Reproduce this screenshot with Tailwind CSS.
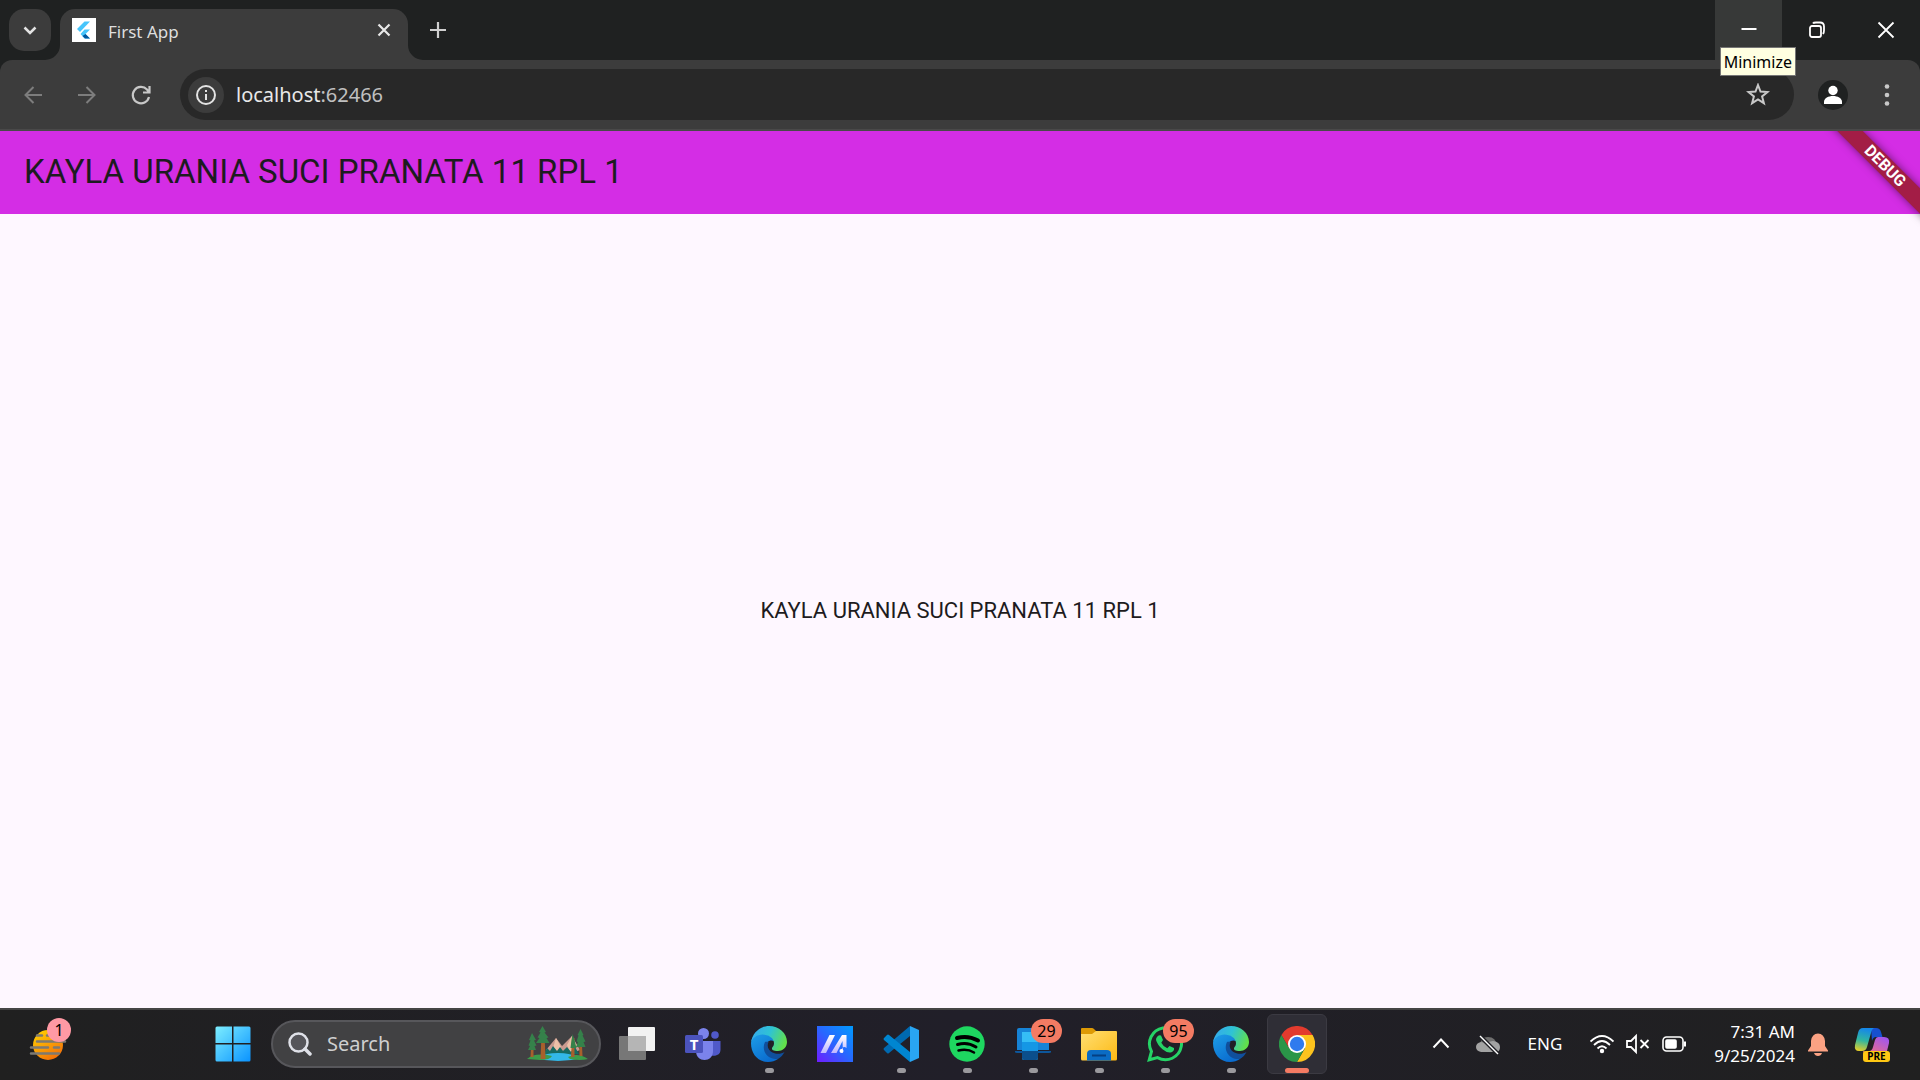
<!DOCTYPE html>
<html lang="en">
<head>
<meta charset="utf-8">
<title>First App</title>
<script src="https://cdn.jsdelivr.net/npm/@tailwindcss/browser@4"></script>
</head>
<body class="flex h-screen flex-col overflow-hidden bg-[#fef7ff] font-['Noto_Sans',sans-serif]">

<svg class="absolute size-0" aria-hidden="true">
  <defs>
    <linearGradient id="e1" x1="0" y1="0.2" x2="1" y2="0.5"><stop offset="0" stop-color="#35a8ee"/><stop offset=".5" stop-color="#2fc3d4"/><stop offset="1" stop-color="#62e04a"/></linearGradient>
    <linearGradient id="e2" x1="0" y1="0" x2="0.6" y2="1"><stop offset="0" stop-color="#1ea0e8"/><stop offset="1" stop-color="#0a6ccf"/></linearGradient>
    <symbol id="edge" viewBox="0 0 36 36">
      <path fill="url(#e2)" d="M0 17C1 8 9 6 15 8c6 2 8 5 8 7-5-2-9 2-8 7 1 6 6 10 12 11-3 2-6 3-10 3C7 36 0 28 0 17z"/>
      <path fill="#104f9c" d="M14 16c-4 8 2 18 13 17 3-2 5-4 6.500-7-3 2-8 2.500-12 .5-4-2-6-6-4-10.500-1-.5-3-.5-3.500 0z"/>
      <path fill="url(#e1)" d="M0 17C1 7 9 0 18 0c10 0 18 7 18 16 0 6-5 9-9 9-5 0-6-1-6-2.500 0-1.500 2-2 2-5.500 0-5-6-8.500-11.500-8.500C6 8.500 1 12 0 17z"/>
    </symbol>
  </defs>
</svg>

<header class="shrink-0 bg-[#1f2121]">
  <div class="flex h-[60px] items-start justify-between">
    <div class="flex items-start pt-[9px] pl-[9px]">
      <button aria-label="Search tabs" class="flex size-[42px] items-center justify-center rounded-[15px] bg-[#3c3c3c]">
        <svg class="size-[18px]" viewBox="0 0 18 18" fill="none" stroke="#e3e3e3" stroke-width="2.500"><path d="M3.500 6.500 9 12l5.500-5.500"/></svg>
      </button>
      <div class="relative ml-[9px] flex h-[51px] w-[348px] rounded-t-[15px] bg-[#3c3c3c] pl-3">
        <svg class="absolute bottom-0 -left-[15px] size-[15px]" viewBox="0 0 15 15"><path fill="#3c3c3c" d="M15 0v15H0A15 15 0 0 0 15 0z"/></svg>
        <svg class="absolute -right-[15px] bottom-0 size-[15px]" viewBox="0 0 15 15"><path fill="#3c3c3c" d="M0 0v15h15A15 15 0 0 1 0 0z"/></svg>
        <svg class="mt-[9px] size-6" viewBox="0 0 24 24"><path fill="#fff" d="M0 0h24v24H0z"/><path fill="#47c5fb" d="M12.500 3.500H18L8 14l-3-3z"/><path fill="#47c5fb" d="M12.500 11.500H18L13.500 16l4.500 4.500h-5.500L8.500 16z"/><path fill="#00569e" d="m10.500 18 3-2 4.500 4.500h-5z"/></svg>
        <span class="mt-[9px] ml-3 text-[17px] leading-7 text-[#dedede]">First App</span>
        <button aria-label="Close tab" class="mt-[9px] mr-3 ml-auto flex size-6 items-center justify-center">
          <svg class="size-6" viewBox="0 0 24 24" stroke="#e8e8e8" stroke-width="2.200"><path d="m6.500 6.500 11 11m0-11-11 11"/></svg>
        </button>
      </div>
      <button aria-label="New tab" class="mt-[9px] ml-[18px] flex size-6 items-center justify-center">
        <svg class="size-6" viewBox="0 0 24 24" stroke="#d0d0d0" stroke-width="2.200"><path d="M12 4v16M4 12h16"/></svg>
      </button>
    </div>
    <div class="flex h-[60px]">
      <button aria-label="Minimize" class="flex w-[67px] items-center justify-center bg-[#373938]">
        <svg class="size-6" viewBox="0 0 24 24" stroke="#fff" stroke-width="2"><path d="M4.500 11h15"/></svg>
      </button>
      <button aria-label="Restore" class="flex w-[69px] items-center justify-center">
        <svg class="size-6" viewBox="0 0 24 24" fill="none" stroke="#fff" stroke-width="1.800"><rect x="5" y="8" width="11" height="11" rx="2"/><path d="M8 5.500q.5-1 3-1h4q4 0 4 4v4q0 2-1 3.500"/></svg>
      </button>
      <button aria-label="Close" class="flex w-[69px] items-center justify-center">
        <svg class="size-6" viewBox="0 0 24 24" stroke="#fff" stroke-width="1.800"><path d="m4.500 4.500 15 15m0-15-15 15"/></svg>
      </button>
    </div>
  </div>
  <div class="flex h-[71px] items-start rounded-t-xl border-b-2 border-[#494949] bg-[#3c3c3c] pt-[9px] pl-[18px]">
    <nav class="flex h-[51px] items-center gap-[31px]">
      <button aria-label="Back"><svg class="size-6" viewBox="0 0 24 24" fill="none" stroke="#7d7d7d" stroke-width="2"><path d="M24 12H7m8.500-8L7.500 12l8 8"/></svg></button>
      <button aria-label="Forward"><svg class="size-6" viewBox="0 0 24 24" fill="none" stroke="#7d7d7d" stroke-width="2"><path d="M5 12h17m-8.500-8 8 8-8 8"/></svg></button>
      <button aria-label="Reload"><svg class="size-6" viewBox="0 0 24 24" fill="none" stroke="#c8c8c8" stroke-width="2.200"><path d="M21 14a8.200 8.200 0 1 1-2-7.500L21 9M21.500 3v6.500H15"/></svg></button>
    </nav>
    <div class="ml-7 flex h-[51px] flex-1 items-center rounded-full bg-[#282828] px-2">
      <button aria-label="Site information" class="flex size-9 items-center justify-center rounded-full bg-[#3c3c3c]">
        <svg class="size-6" viewBox="0 0 24 24" fill="none" stroke="#e3e3e3" stroke-width="2"><circle cx="12" cy="12" r="9"/><path d="M12 11v6M12 7v2"/></svg>
      </button>
      <div class="relative ml-3 h-7 flex-1 text-[20px] leading-7">
        <p aria-hidden="true" class="text-[#c0c0c0]"><span class="text-[#e8e8e8]">localhost</span>:62466</p>
        <input aria-label="Address" class="absolute inset-0 w-full bg-transparent text-transparent outline-none">
      </div>
      <button aria-label="Bookmark this tab" class="mr-4">
        <svg class="size-6" viewBox="0 0 24 24" fill="none" stroke="#c8c8c8" stroke-width="2"><path d="m12 2 2.500 6.500 7 .5-5.400 4.400 1.800 6.800-5.900-3.800-5.900 3.800 1.800-6.800L2.500 9l7-.5z"/></svg>
      </button>
    </div>
    <div class="flex h-[51px] items-center gap-[27px] pr-[21px] pl-6">
      <button aria-label="Profile" class="flex size-[30px] items-center justify-center overflow-hidden rounded-full bg-[#1f2121]">
        <svg class="size-[30px]" viewBox="0 0 30 30" fill="#fff"><circle cx="15" cy="10.500" r="4.700"/><path d="M6 24v-2c0-8 18-8 18 0v2z"/></svg>
      </button>
      <button aria-label="Menu"><svg class="size-6" viewBox="0 0 24 24" fill="#c8c8c8"><circle cx="12" cy="3.500" r="2.300"/><circle cx="12" cy="12" r="2.300"/><circle cx="12" cy="20.500" r="2.300"/></svg></button>
    </div>
  </div>
  <div role="tooltip" class="absolute top-[47px] right-[124px] border border-[#767676] bg-[#ffffe1] px-[3px] pt-px text-[16px] leading-[26px] text-black">Minimize</div>
</header>

<main class="relative flex flex-1 flex-col font-[Roboto,sans-serif] text-[#1d1b20]">
  <h1 class="flex h-[83px] shrink-0 items-center bg-[#d42de5] px-6 pb-[2px] text-[33px] leading-[42px]">KAYLA URANIA SUCI PRANATA 11 RPL 1</h1>
  <div class="absolute top-0 right-0 size-24 overflow-hidden">
    <div class="absolute top-[26px] -left-[9px] h-[18px] w-[140px] rotate-45 bg-[#a31d46] text-center text-[16px] leading-[18px] font-bold text-white shadow-[0_0_9px_rgba(0,0,0,0.5)]">DEBUG</div>
  </div>
  <div class="flex flex-1 items-center justify-center">
    <p class="text-[22px] leading-[30px]">KAYLA URANIA SUCI PRANATA 11 RPL 1</p>
  </div>
</main>

<footer class="flex h-[72px] shrink-0 items-center justify-between border-t-2 border-[#454545] bg-linear-to-r from-[#202020] via-[#211f29] to-[#202020] pb-[2px] text-white">
  <div class="flex items-center">
    <button aria-label="Weather" class="relative ml-[29px] h-12 w-[42px]">
      <svg class="size-full" viewBox="0 0 42 48"><defs><linearGradient id="s" x1="0.200" y1="0" x2=".8" y2="1"><stop offset="0" stop-color="#ffd000"/><stop offset="1" stop-color="#f26a0a"/></linearGradient></defs><circle cx="19" cy="25" r="15" fill="url(#s)"/><path d="M8 15.500h5m5 0h3M8 21.500h28M2 27.500h17m6 0h5M2 33.500h28" stroke="#7d7a72" stroke-width="2.500" stroke-linecap="round"/></svg>
      <span class="absolute -top-[2px] right-0 size-6 rounded-full bg-[#ff99a4] text-center text-[16px] leading-6 text-black">1</span>
    </button>
    <button aria-label="Start" class="ml-[129px] flex w-[66px] justify-center">
      <svg class="size-9" viewBox="0 0 36 36"><defs><linearGradient id="w" x1="0" y1="0" x2="1" y2="1"><stop offset="0" stop-color="#7deeff"/><stop offset="1" stop-color="#0a93ff"/></linearGradient></defs><path fill="url(#w)" d="M2 .5h15v16.500H.5V2Q.5.5 2 .5zM18.500.5H34q1.500 0 1.500 1.500v15h-17zM.5 18.500H17v17H2q-1.500 0-1.500-1.500zM18.500 18.500h17V34q0 1.500-1.500 1.500H18.500z"/></svg>
    </button>
    <label class="ml-[5px] flex h-12 w-[330px] items-center rounded-full border-2 border-[#57575b] bg-[#414143] pr-[9px] pl-[15px]">
      <svg class="size-6 shrink-0" viewBox="0 0 24 24" fill="none" stroke="#dfe1e8" stroke-width="2.500"><circle cx="10.500" cy="10.500" r="9" fill="#55555a"/><path d="m17 17 5 5" stroke-width="3.500" stroke-linecap="round"/></svg>
      <input type="text" placeholder="Search" aria-label="Search" class="ml-[15px] min-w-0 flex-1 bg-transparent text-[20px] leading-7 outline-none placeholder:text-[#cfcfcf]">
      <svg class="h-9 w-[64px] shrink-0" viewBox="0 0 64 36">
        <path d="m20 24 10-12 6 8 10-10 8 14-10 4H26z" fill="#c99a90"/><path d="m30 12 5 9-4 5-4-4zM46 10l5 10-7 6-3-7z" fill="#ecc0a8"/>
        <path d="m18 28 3-6 3 3 3-5 4 5 3-4 3 4 4-4 4 5 4-5 4 7z" fill="#176b62"/>
        <path d="M8 32q24-10 48 0-24 6-48 0z" fill="#32b8e8"/>
        <path d="M1 33q8-7 25-3-2 4-12 4zM42 31q10-5 20 2-8 2-18 0z" fill="#3d9b4a"/>
        <path d="M5.500 12h2V31h-3zM15.500 8h3l1 25h-5zM46 12h2.500v19H45zM53 10h2.500l1 20h-3z" fill="#a8602c"/>
        <path d="m6 7 4 7-2 .5 2.500 5-2 .5 1.500 4H2l2-4-1.500-.5 2-5-1.500-.5zM16.500 0l3.500 6-1.500.5 4 5-2 .5 3 5H10l3.500-5-2-.5 3-5-1.500-.5zM46.500 8l2 6 2 8h-6l1-8zM54.500 3l3 6-1 .5 3 6-2 .5 2 5H50l2-5-1.500-.5 2-6-1-.5z" fill="#35814a"/>
      </svg>
    </label>
    <div class="ml-[3px] flex h-[60px] items-center">
      <button aria-label="Task view" class="flex h-full w-[66px] items-center justify-center">
        <svg class="size-9" viewBox="0 0 36 36"><rect x="9" y="1" width="27" height="24" rx="1" fill="#f2f2f2"/><rect y="10" width="27" height="24" rx="1" fill="#777"/><path d="M9 10h18v15H9z" fill="#b5b5b5"/></svg>
      </button>
      <button aria-label="Teams" class="flex h-full w-[66px] items-center justify-center">
        <svg class="size-9" viewBox="0 0 36 36"><circle cx="30" cy="9" r="3.800" fill="#5059c9"/><path d="M26 15h9.500v8.500c0 5-4 7-9.500 6z" fill="#5059c9"/><circle cx="18.500" cy="7.500" r="5.500" fill="#7b83eb"/><path d="M11 15h17v10c0 6-4 9-8.500 9S11 31 11 25z" fill="#7b83eb"/><rect y="9" width="18" height="18" rx="1.500" fill="#4b53bc"/><text x="9" y="23.500" text-anchor="middle" fill="#fff" font-family="Noto Sans, sans-serif" font-size="15" font-weight="700">T</text></svg>
      </button>
      <button aria-label="Edge" class="relative flex h-full w-[66px] items-center justify-center">
        <svg class="size-9"><use href="#edge"/></svg><span class="absolute bottom-[1px] h-[5px] w-[9px] rounded-full bg-[#9a999d]"></span>
      </button>
      <button aria-label="MyASUS" class="flex h-full w-[66px] items-center justify-center">
        <svg class="size-9" viewBox="0 0 36 36"><defs><linearGradient id="m" x1="1" y1="0" x2="0" y2="1"><stop offset="0" stop-color="#009bff"/><stop offset=".5" stop-color="#2867ff"/><stop offset="1" stop-color="#701cff"/></linearGradient><linearGradient id="mw" x1="0" y1="0" x2="0" y2="1"><stop offset="0" stop-color="#fff"/><stop offset="1" stop-color="#c0b6ff"/></linearGradient></defs><path fill="url(#m)" d="M0 0h36v36H0z"/><path fill="url(#mw)" d="M12.500 9H18L9 27H3.500zM25 9h4.500v13a3 3 0 0 0-4 5H26l-.5-12-6 12H14z"/><circle cx="24.500" cy="25" r="2" fill="#fff"/></svg>
      </button>
      <button aria-label="Visual Studio Code" class="relative flex h-full w-[66px] items-center justify-center">
        <svg class="size-9" viewBox="0 0 36 36"><path fill="#0069b0" d="M27 0v10L6 27q-1 1-2 0l-3-3q-1-1 0-2z"/><path fill="#0086d1" d="M1 14q-1-1 0-2l3-3q1-1 2 0l21 17v10z"/><path fill="#29a5f2" d="m27 0 9 4v28l-9 4z"/></svg><span class="absolute bottom-[1px] h-[5px] w-[9px] rounded-full bg-[#9a999d]"></span>
      </button>
      <button aria-label="Spotify" class="relative flex h-full w-[66px] items-center justify-center">
        <svg class="size-9" viewBox="0 0 36 36" fill="none" stroke="#000" stroke-linecap="round"><circle cx="18" cy="18" r="17.700" fill="#1ed760" stroke="none"/><path d="M8 12q11-3 21 2.500" stroke-width="4"/><path d="M8.500 18.500q10-3 18.500 2.500" stroke-width="3"/><path d="M9.500 24.500q9-2 15.500 2" stroke-width="2.500"/></svg><span class="absolute bottom-[1px] h-[5px] w-[9px] rounded-full bg-[#9a999d]"></span>
      </button>
      <button aria-label="Phone Link" class="relative flex h-full w-[66px] items-center justify-center">
        <svg class="size-9" viewBox="0 0 36 36"><path fill="#1683d6" d="M2 4q0-2 2-2h28q2 0 2 2v20H2z"/><path fill="#0d569b" d="M0 25h36v1q0 1-2 1H2q-2 0-2-1z"/><path fill="#35bdf5" d="M7 6h16v26q0 2-2 2H9q-2 0-2-2z"/><path fill="#1597e5" d="M7 16h16v9H7z"/><path fill="#0b4f8c" d="M7 25h16v7q0 2-2 2H9q-2 0-2-2z"/></svg><span class="absolute top-[5px] left-[31px] h-6 w-[31px] rounded-full bg-[#f47b63] text-center text-[16px] leading-6 text-black">29</span><span class="absolute bottom-[1px] h-[5px] w-[9px] rounded-full bg-[#9a999d]"></span>
      </button>
      <button aria-label="File Explorer" class="relative flex h-full w-[66px] items-center justify-center">
        <svg class="size-9" viewBox="0 0 36 36"><defs><linearGradient id="f" x1="0" y1="0" x2="1" y2="1"><stop offset="0" stop-color="#ffdf73"/><stop offset="1" stop-color="#fdb913"/></linearGradient></defs><path fill="#dd9a05" d="M0 3q0-1 1-1h10q1 0 2 1l2 2v5H0z"/><path fill="url(#f)" d="M0 8h11l4-3h20q1 0 1 1v27q0 1.500-1.500 1.500h-33Q0 34.500 0 33z"/><path fill="#0b6cc4" d="M6 34.500V28q0-4 4-4h16q4 0 4 4v6.500z"/><path d="M11 29.500h14" stroke="#053f82" stroke-width="2"/></svg><span class="absolute bottom-[1px] h-[5px] w-[9px] rounded-full bg-[#9a999d]"></span>
      </button>
      <button aria-label="WhatsApp" class="relative flex h-full w-[66px] items-center justify-center">
        <svg class="size-9" viewBox="0 0 36 36"><path fill="none" stroke="#25d366" stroke-width="3" d="m2.200 33.800 2.300-8.300A16 16 0 1 1 10.500 31.600z"/><path fill="#25d366" d="M10 11q1.500-2.500 4-1.500l2 4.500-1.700 2.700q2 4 6 5.600l2.200-2.300 4.500 2q.5 3-2.500 4.300-4 1.200-9-3T9 14q0-2 1-3z"/></svg><span class="absolute top-[5px] left-[31px] h-6 w-[31px] rounded-full bg-[#f47b63] text-center text-[16px] leading-6 text-black">95</span><span class="absolute bottom-[1px] h-[5px] w-[9px] rounded-full bg-[#9a999d]"></span>
      </button>
      <button aria-label="Edge" class="relative flex h-full w-[66px] items-center justify-center">
        <svg class="size-9"><use href="#edge"/></svg><span class="absolute bottom-[1px] h-[5px] w-[9px] rounded-full bg-[#9a999d]"></span>
      </button>
      <button aria-label="Chrome" class="relative mx-[3px] flex size-[60px] items-center justify-center rounded-md border border-[#3b3a42] bg-[#2f2e36]">
        <svg class="size-9" viewBox="0 0 36 36"><path fill="#e33b2e" d="M2.400 9A18 18 0 0 1 33.600 9H18l-7.800 13.500z"/><path fill="#fcc31e" d="M33.600 9A18 18 0 0 1 18 36l7.800-13.500L18 9z"/><path fill="#2a9648" d="M18 36A18 18 0 0 1 2.400 9l7.800 13.500L18 27z"/><path fill="#2a9648" d="M10 22h15.800L18 36z"/><circle cx="18" cy="18" r="9" fill="#fff"/><circle cx="18" cy="18" r="7.200" fill="#2f7bee"/></svg><span class="absolute bottom-0 h-[5px] w-6 rounded-full bg-[#f47b63]"></span>
      </button>
    </div>
  </div>
  <div class="flex items-center">
    <button aria-label="Show hidden icons"><svg class="size-[18px]" viewBox="0 0 18 18" fill="none" stroke="#fff" stroke-width="2"><path d="m1.500 12.500 7.500-8 7.500 8"/></svg></button>
    <svg class="ml-[26px] size-6" viewBox="0 0 24 24"><path fill="#6f6f6f" d="M4 14q0-9 8-9t9 9z"/><path fill="#a3a3a3" d="M5 20q-5-1-5-5t5-5q3 0 5 2 3-3 7-3 7 1 7 6t-4 5z"/><path d="m4 4 17 17" stroke="#202025" stroke-width="4"/><path d="m4 4 18 18" stroke="#fff" stroke-width="1.500"/></svg>
    <span class="ml-7 text-[17px] leading-6">ENG</span>
    <button aria-label="Network, volume and battery" class="ml-7 flex items-center gap-3">
      <svg class="size-6" viewBox="0 0 24 24" fill="none" stroke="#fff" stroke-width="1.800"><path d="M.5 9.500q11.500-11 23 0M4 13q8-8 16 0M7.500 16.500q4.500-4.500 9 0"/><circle cx="12" cy="19" r="2.200" fill="#fff" stroke="none"/></svg>
      <svg class="size-6" viewBox="0 0 24 24" fill="none" stroke="#fff" stroke-width="1.800"><path d="M1 9h4l5-5v16l-5-5H1zM14.500 8l8 8m0-8-8 8"/></svg>
      <svg class="size-6" viewBox="0 0 24 24" fill="none" stroke="#fff" stroke-width="1.600"><rect x="1" y="5" width="20" height="14" rx="3.500"/><rect x="4" y="8" width="10" height="8" rx="1" fill="#fff"/><path d="M23 9.500v5" stroke-width="2.500"/></svg>
    </button>
    <div class="ml-7 text-right text-[17px] leading-6"><p>7:31 AM</p><p>9/25/2024</p></div>
    <button aria-label="Notifications" class="ml-3"><svg class="size-6" viewBox="0 0 24 24" fill="#fba283"><path d="M1 18.500 4 14V9q1-7.500 7-7.500T18 9v5l3 4.500v1H1zM7 21h8q-1 3-4 3t-4-3z"/></svg></button>
    <button aria-label="Copilot" class="relative mr-[30px] ml-[23px] size-9">
      <svg class="size-9" viewBox="0 0 36 36"><defs><linearGradient id="c1" x1="0.300" y1="0" x2=".1" y2="1"><stop offset="0" stop-color="#1688e8"/><stop offset=".5" stop-color="#30b6a0"/><stop offset="1" stop-color="#f0cf20"/></linearGradient><linearGradient id="c2" x1=".8" y1="0" x2=".2" y2="1"><stop offset="0" stop-color="#a156ef"/><stop offset="1" stop-color="#ff7468"/></linearGradient></defs><path fill="#1750d0" d="M17 2h5q4 0 5 4l1.500 5H22q-3 0-4 4z"/><path fill="url(#c1)" d="M9 2h12q-3 0-4 5l-4 14q-1 4-5 4H5q-5 0-4-6L4 7q1-5 5-5z"/><path fill="url(#c2)" d="M24 11h6q6 0 5 6l-3 12q-1 4-6 4H15q-4 0-6-8 4 1 6 0 3 0 4-4l2-7q1-3 3-3z"/></svg>
      <span class="absolute right-0 bottom-0 h-[11px] w-[27px] rounded-[3px] bg-[#ffc814] text-center text-[10px] leading-[11px] font-bold text-black">PRE</span>
    </button>
  </div>
</footer>
</body>
</html>
